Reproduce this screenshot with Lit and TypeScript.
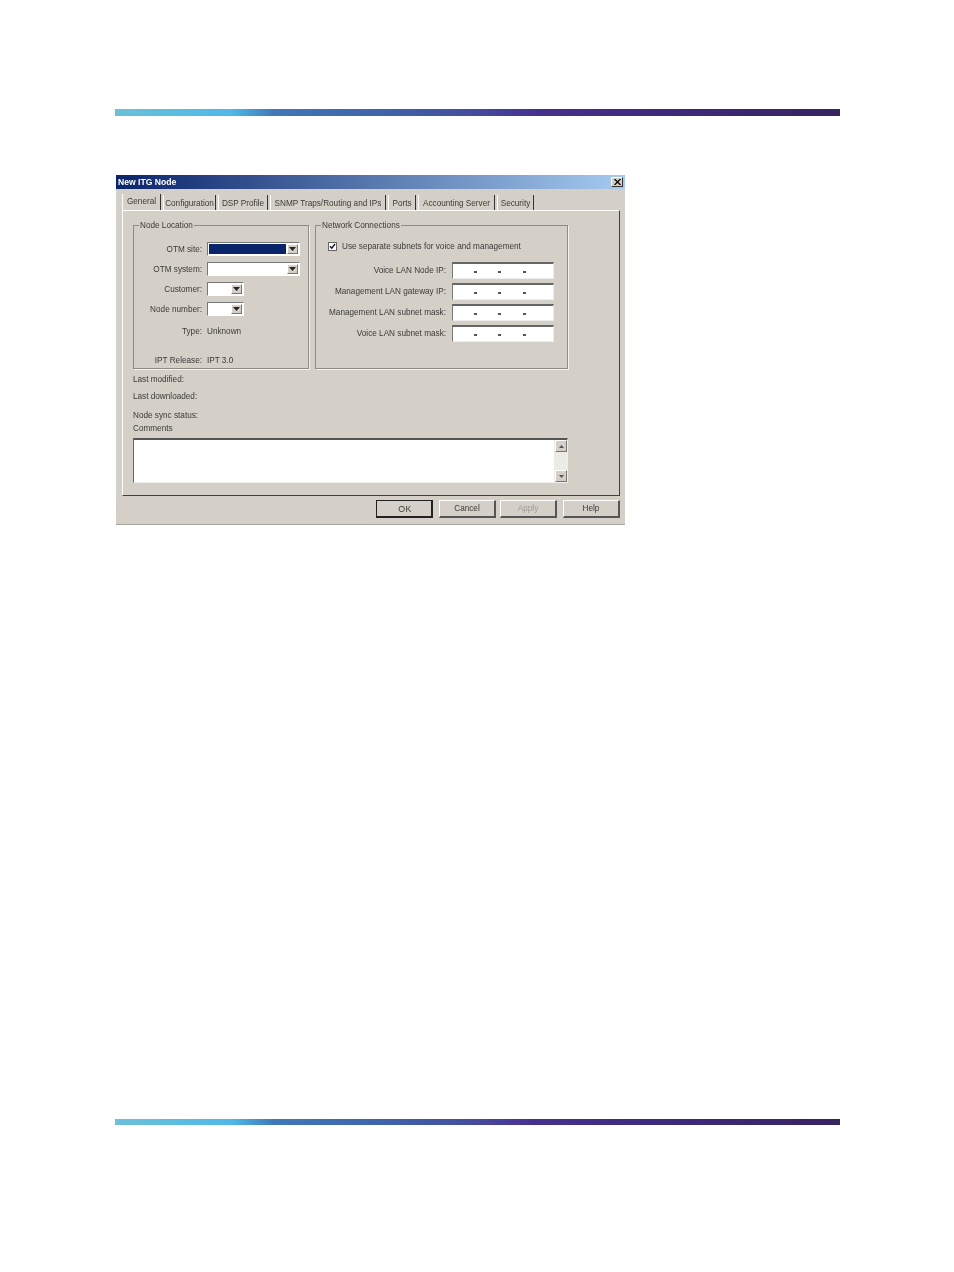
import { LitElement, html, css } from "lit";
import { customElement } from "lit/decorators.js";

const arrow = () => html`<svg width="7" height="4" viewBox="0 0 7 4"><path d="M0 0H7L3.5 4Z" fill="#222"></path></svg>`;
const small = (up: boolean) => html`<svg width="5" height="3" viewBox="0 0 5 3"><path d=${up ? "M2.5 0L5 3H0Z" : "M0 0H5L2.5 3Z"} fill="#555"></path></svg>`;

@customElement("app-root")
export class AppRoot extends LitElement {
  static styles = css`
    :host { display: block; width: 954px; height: 1272px; background: #fff; font-family: "Liberation Sans", Arial, sans-serif; font-size: 8.2px; color: #3a3a38; box-sizing: border-box; padding-top: 109px; overflow: hidden; }
    .bar { width: 725px; margin-left: 115px; height: 7px; background: linear-gradient(90deg, #6cc0d8 0%, #4fb9e8 16%, #3f78b8 22%, #3f62a8 38%, #464a9e 50%, #46308e 58%, #3e2a7c 75%, #37235f 100%); }
    .bar.bottom { height: 6px; margin-top: 594px; }
    .dialog { width: 509px; height: 350px; margin: 59px 0 0 116px; background: #d4d0c8; box-sizing: border-box; border-bottom: 1px solid #a8a59e; display: flex; flex-direction: column; filter: blur(0.25px); }
    .title { height: 14px; background: linear-gradient(90deg, #0a246a, #a6caf0); color: #fff; font-weight: bold; font-size: 8.6px; line-height: 14px; padding: 0 2px; display: flex; justify-content: space-between; align-items: center; flex: none; }
    .close { width: 12px; height: 10px; background: #d4d0c8; border: 1px solid; border-color: #fff #333 #333 #fff; box-sizing: border-box; display: flex; align-items: center; justify-content: center; }
    .tabs { display: flex; height: 15px; margin: 6px 0 0 6px; flex: none; align-items: stretch; }
    .tab { box-sizing: border-box; border-right: 1px solid #333; border-left: 1px solid #fff; text-align: center; line-height: 18px; margin-right: 2px; flex: none; white-space: nowrap; }
    .tab.active { line-height: 16px; height: 16px; background: #d4d0c8; position: relative; z-index: 1; margin-top: -1px; }
    .panel { margin-left: 6px; width: 498px; height: 286px; box-sizing: border-box; border: 1px solid; border-color: #fff #404040 #404040 #fff; padding: 10px 0 0 10px; flex: none; }
    .groups { display: flex; gap: 6px; width: 435px; height: 148px; }
    fieldset { margin: 0; box-sizing: border-box; border: 1px solid #8f8c85; box-shadow: 1px 1px 0 #f4f2ee; padding: 0; min-width: 0; height: 148px; }
    legend { padding: 0 1px; margin-left: 5px; line-height: 9px; height: 9px; white-space: nowrap; }
    .node { width: 176px; }
    .net { width: 253px; }
    .form { display: grid; grid-template-columns: 68px auto; column-gap: 5px; padding-top: 12px; align-items: center; justify-items: end; grid-template-rows: 14px 14px 14px 14px 18px 28px; row-gap: 6px; }
    .form > .val { justify-self: start; }
    .combo { justify-self: start; box-sizing: border-box; height: 14px; width: 93px; background: #fff; border: 1px solid; border-color: #777 #fff #fff #777; display: flex; justify-content: flex-end; padding: 1px; }
    .combo.small { width: 37px; }
    .combo.sel .fill { background: #0a246a; margin-right: 1px; }
    .combo .fill { flex: 1; }
    .btn { width: 11px; background: #d4d0c8; border: 1px solid; border-color: #fff #777 #777 #fff; box-sizing: border-box; display: flex; align-items: center; justify-content: center; flex: none; }
    .check { display: flex; align-items: center; gap: 5px; padding: 11px 0 0 12px; height: 10px; }
    .cb { width: 9px; height: 9px; box-sizing: border-box; background: #fff; border: 1px solid #666; display: flex; }
    .ips { display: grid; grid-template-columns: 130px 102px; column-gap: 6px; margin-top: 11px; justify-items: end; align-items: center; grid-auto-rows: 17px; row-gap: 4px; }
    .ips span { white-space: nowrap; }
    .ip { box-sizing: border-box; width: 102px; height: 17px; background: #fff; border: 1px solid; border-color: #666 #eee #eee #777; border-top-width: 2px; display: grid; grid-template-columns: repeat(3, 24.5px); padding-left: 10px; justify-items: center; align-items: center; }
    .dash { width: 3px; height: 2px; background: #555; margin-top: 2px; }
    .stat { line-height: 10px; height: 10px; }
    .s1 { margin-top: 6px; }
    .s2 { margin-top: 7px; }
    .s3 { margin-top: 9px; }
    .s4 { margin-top: 3px; }
    .text { margin-top: 4px; width: 435px; height: 45px; box-sizing: border-box; background: #fff; border: 1px solid; border-color: #555 #eee #eee #666; border-top-width: 2px; display: flex; justify-content: flex-end; }
    .scroll { width: 13px; background: #ecebe6; display: flex; flex-direction: column; justify-content: space-between; flex: none; }
    .sb { width: 12px; height: 12px; margin-left: 1px; background: #d4d0c8; border: 1px solid; border-color: #fff #777 #777 #fff; box-sizing: border-box; display: flex; align-items: center; justify-content: center; }
    .actions { display: flex; justify-content: flex-end; gap: 6px; padding: 4px 5px 0 0; }
    .actions button { font: inherit; color: inherit; width: 57px; height: 18px; padding: 0; background: #d4d0c8; border: 1px solid; border-color: #fff #555 #555 #fff; border-width: 1px 2px 2px 1px; }
    .actions button.def { border: 1px solid #222; border-width: 1px 2px 2px 1px; font-size: 8.8px; letter-spacing: 0.3px; padding-left: 2px; }
    .actions button.off { color: #a09d96; margin-left: -2px; }
  `;

  render() {
    const tabs: [string, number][] = [["Configuration", 53], ["DSP Profile", 50], ["SNMP Traps/Routing and IPs", 116], ["Ports", 28], ["Accounting Server", 77], ["Security", 37]];
    const ips = ["Voice LAN Node IP:", "Management LAN gateway IP:", "Management LAN subnet mask:", "Voice LAN subnet mask:"];
    return html`
      <div class="bar"></div>
      <div class="dialog">
        <div class="title"><span>New ITG Node</span>
          <span class="close"><svg width="7" height="6" viewBox="0 0 7 6"><path d="M0.5 0L6.5 6M6.5 0L0.5 6" stroke="#111" stroke-width="1.4"></path></svg></span></div>
        <div class="tabs">
          <div class="tab active" style="width:39px">General</div>
          ${tabs.map(([t, w]) => html`<div class="tab" style="width:${w}px">${t}</div>`)}
        </div>
        <div class="panel">
          <div class="groups">
            <fieldset class="node"><legend>Node Location</legend>
              <div class="form">
                <span>OTM site:</span><div class="combo sel"><div class="fill"></div><div class="btn">${arrow()}</div></div>
                <span>OTM system:</span><div class="combo"><div class="fill"></div><div class="btn">${arrow()}</div></div>
                <span>Customer:</span><div class="combo small"><div class="fill"></div><div class="btn">${arrow()}</div></div>
                <span>Node number:</span><div class="combo small"><div class="fill"></div><div class="btn">${arrow()}</div></div>
                <span>Type:</span><span class="val">Unknown</span>
                <span>IPT Release:</span><span class="val">IPT 3.0</span>
              </div>
            </fieldset>
            <fieldset class="net"><legend>Network Connections</legend>
              <div class="check"><span class="cb"><svg width="7" height="7" viewBox="0 0 7 7"><path d="M1 3.2L2.8 5.2L6 1" fill="none" stroke="#111" stroke-width="1.3"></path></svg></span><span>Use separate subnets for voice and management</span></div>
              <div class="ips">
                ${ips.map((l) => html`<span>${l}</span><div class="ip"><i class="dash"></i><i class="dash"></i><i class="dash"></i></div>`)}
              </div>
            </fieldset>
          </div>
          <div class="stat s1">Last modified:</div>
          <div class="stat s2">Last downloaded:</div>
          <div class="stat s3">Node sync status:</div>
          <div class="stat s4">Comments</div>
          <div class="text"><div class="scroll"><div class="sb">${small(true)}</div><div class="sb">${small(false)}</div></div></div>
        </div>
        <div class="actions">
          <button class="def">OK</button><button>Cancel</button><button class="off">Apply</button><button>Help</button>
        </div>
      </div>
      <div class="bar bottom"></div>
    `;
  }
}
